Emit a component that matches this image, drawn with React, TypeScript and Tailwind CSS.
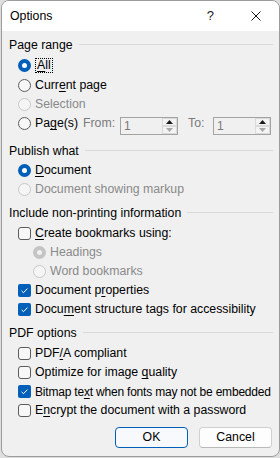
import type { ReactNode } from 'react';

const font = { fontFamily: '"Liberation Sans", Arial, sans-serif' };

function Radio({ checked, disabled }: { checked?: boolean; disabled?: boolean }) {
  if (checked && disabled) {
    return (
      <span className="flex h-[13px] w-[13px] shrink-0 items-center justify-center rounded-full bg-[#c4c4c4]">
        <span className="h-[5px] w-[5px] rounded-full bg-[#f0f0f0]" />
      </span>
    );
  }
  if (checked) {
    return (
      <span className="flex h-[13px] w-[13px] shrink-0 items-center justify-center rounded-full bg-[#005fb8]">
        <span className="h-[5px] w-[5px] rounded-full bg-white" />
      </span>
    );
  }
  return (
    <span
      className={
        disabled
          ? 'h-[13px] w-[13px] shrink-0 rounded-full border border-[#c8c8c8] bg-[#f5f5f5]'
          : 'h-[13px] w-[13px] shrink-0 rounded-full border border-[#5c5c5c] bg-[#f7f7f7]'
      }
    />
  );
}

function Check({ checked }: { checked?: boolean }) {
  if (checked) {
    return (
      <span className="flex h-[13px] w-[13px] shrink-0 items-center justify-center rounded-[2px] bg-[#005fb8]">
        <svg width="13" height="13" viewBox="0 0 13 13" fill="none">
          <path d="M3.6 6.9 L5.5 8.7 L9.4 4.6" stroke="white" strokeWidth="1" />
        </svg>
      </span>
    );
  }
  return <span className="h-[13px] w-[13px] shrink-0 rounded-[3px] border border-[#5c5c5c] bg-[#f7f7f7]" />;
}

function Row({ children, indent = 16 }: { children: ReactNode; indent?: number }) {
  return (
    <div className={`flex h-[19px] items-center gap-[4px] ${indent === 31 ? 'pl-[31px]' : 'pl-[16px]'}`}>
      {children}
    </div>
  );
}

function Heading({ title, className }: { title: string; className: string }) {
  return (
    <div className={`flex h-[14px] items-center gap-[6px] pl-[7px] pr-[6px] ${className}`}>
      <span className="leading-[14px] text-black">{title}</span>
      <span className="mt-[-2px] h-px flex-1 bg-[#d9d9d9]" />
    </div>
  );
}

function SpinBox() {
  return (
    <div className="mt-[3px] flex h-[18px] w-[58px] shrink-0 border border-[#a3a3a3] bg-[#f0f0f0]">
      <span className="flex-1 pl-[3px] text-[12px] leading-[17px] text-[#7a7a7a]">1</span>
      <div className="flex w-[15px] flex-col">
        <span className="flex h-[8px] items-center justify-center border border-[#dadada] bg-[#f3f3f3]">
          <svg width="7" height="4" viewBox="0 0 7 4">
            <path d="M0 4 L3.5 0 L7 4 Z" fill="#1a1a1a" />
          </svg>
        </span>
        <span className="flex h-[8px] items-center justify-center border border-[#dadada] bg-[#f3f3f3]">
          <svg width="7" height="4" viewBox="0 0 7 4">
            <path d="M0 0 L3.5 4 L7 0 Z" fill="#a8a8a8" />
          </svg>
        </span>
      </div>
    </div>
  );
}

export default function App() {
  return (
    <div className="h-[458px] w-[280px] whitespace-nowrap bg-[#dedede] text-[12.3px]" style={font}>
      <div className="ml-px flex h-[457px] w-[279px] flex-col overflow-hidden rounded-lg border border-[#9c9c9c] bg-[#f0f0f0]">
        <div className="flex h-[30px] items-center bg-white pl-[8px]">
          <span className="flex-1 text-[12.3px] text-black">Options</span>
          <span className="mr-[37px] text-[13px] text-[#1a1a1a]">?</span>
          <svg width="10" height="10" viewBox="0 0 10 10" className="mr-[18px]">
            <path d="M0.5 0.5 L9.5 9.5 M9.5 0.5 L0.5 9.5" stroke="#1a1a1a" strokeWidth="1" />
          </svg>
        </div>

        <Heading title="Page range" className="mt-[7px]" />
        <div className="mt-[4px] flex flex-col">
          <Row>
            <Radio checked />
            <span className="border border-dotted border-black px-px leading-[13px]">
              <u className="underline-offset-[2px]">A</u>ll
            </span>
          </Row>
          <div className="flex h-[20px] items-center gap-[4px] pl-[16px]">
            <Radio />
            <span>
              Curr<u className="underline-offset-[2px]">e</u>nt page
            </span>
          </div>
          <Row>
            <Radio disabled />
            <span className="text-[#8a8a8a]">Selection</span>
          </Row>
          <div className="flex h-[19px] items-start pl-[16px]">
            <div className="flex h-[19px] w-[65px] shrink-0 items-center gap-[4px]">
              <Radio />
              <span>
                Pa<u className="underline-offset-[2px]">g</u>e(s)
              </span>
            </div>
            <div className="flex h-[19px] w-[37px] shrink-0 items-center text-[#7a7a7a]">From:</div>
            <SpinBox />
            <div className="flex h-[19px] w-[35px] shrink-0 items-center pl-[10px] text-[#7a7a7a]">To:</div>
            <SpinBox />
          </div>
        </div>

        <Heading title="Publish what" className="mt-[11px]" />
        <div className="mt-[3px] flex flex-col">
          <Row>
            <Radio checked />
            <span>
              <u className="underline-offset-[2px]">D</u>ocument
            </span>
          </Row>
          <Row>
            <Radio disabled />
            <span className="text-[#8a8a8a]">Document showing markup</span>
          </Row>
        </div>

        <Heading title="Include non-printing information" className="mt-[7px]" />
        <div className="mt-[4px] flex flex-col">
          <Row>
            <Check />
            <span>
              <u className="underline-offset-[2px]">C</u>reate bookmarks using:
            </span>
          </Row>
          <Row indent={31}>
            <Radio checked disabled />
            <span className="text-[#8a8a8a]">Headings</span>
          </Row>
          <Row indent={31}>
            <Radio disabled />
            <span className="text-[#8a8a8a]">Word bookmarks</span>
          </Row>
          <Row>
            <Check checked />
            <span>
              Document p<u className="underline-offset-[2px]">r</u>operties
            </span>
          </Row>
          <Row>
            <Check checked />
            <span>
              Docu<u className="underline-offset-[2px]">m</u>ent structure tags for accessibility
            </span>
          </Row>
        </div>

        <Heading title="PDF options" className="mt-[7px]" />
        <div className="mt-[4px] flex flex-col">
          <Row>
            <Check />
            <span>
              PDF<u className="underline-offset-[2px]">/</u>A compliant
            </span>
          </Row>
          <Row>
            <Check />
            <span>
              Optimize for image <u className="underline-offset-[2px]">q</u>uality
            </span>
          </Row>
          <Row>
            <Check checked />
            <span className="text-[12px] tracking-[-0.2px]">
              Bitmap te<u className="underline-offset-[2px]">x</u>t when fonts may not be embedded
            </span>
          </Row>
          <Row>
            <Check />
            <span>
              E<u className="underline-offset-[2px]">n</u>crypt the document with a password
            </span>
          </Row>
        </div>

        <div className="mt-[7px] flex justify-end gap-[11px] pr-[7px]">
          <button className="h-[21px] w-[73px] rounded-[4px] border border-[#005fb8] bg-[#f7f9fc] text-[12.3px] text-black">
            OK
          </button>
          <button className="h-[21px] w-[73px] rounded-[4px] border border-[#d0d0d0] border-b-[#b8b8b8] bg-[#fdfdfd] text-[12.3px] text-black">
            Cancel
          </button>
        </div>
      </div>
    </div>
  );
}
